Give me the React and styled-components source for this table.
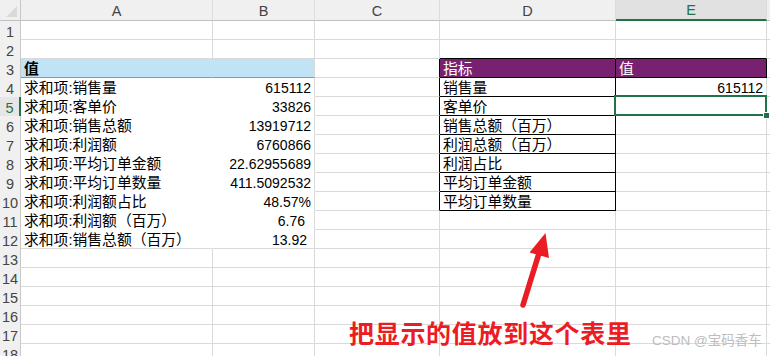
import React from "react";
import styled, { createGlobalStyle } from "styled-components";

const GRID = "#dadada";
const GREEN = "#217346";
const BLACK = "#000";
const PURPLE = "#782170";
const BLUE_FILL = "#c0e4f5";
const BLUE_LINE = "#5ba8d8";

const COLUMNS = ["A", "B", "C", "D", "E", ""];
const ROW_COUNT = 18;
const ACTIVE_ROW = 5;
const ACTIVE_COL = 4;

const pivot = [
  ["求和项:销售量", "615112"],
  ["求和项:客单价", "33826"],
  ["求和项:销售总额", "13919712"],
  ["求和项:利润额", "6760866"],
  ["求和项:平均订单金额", "22.62955689"],
  ["求和项:平均订单数量", "411.5092532"],
  ["求和项:利润额占比", "48.57%"],
  ["求和项:利润额（百万）", "6.76", 9],
  ["求和项:销售总额（百万）", "13.92", 7],
];

const indicators = [
  "销售量",
  "客单价",
  "销售总额（百万）",
  "利润总额（百万）",
  "利润占比",
  "平均订单金额",
  "平均订单数量",
];

// describes one cell of the sheet: row is 1-based, col 0..5 (A..F)
const cellFor = (row, col) => {
  const cell = {};
  const inPivot = row >= 4 && row <= 12;
  const inTable = row >= 3 && row <= 10;

  if (col === 0 || col === 1) {
    if (row === 3) {
      cell.fill = BLUE_FILL;
      cell.bottom = BLUE_LINE;
      if (col === 0) {
        cell.right = "transparent";
        cell.text = "值";
        cell.bold = true;
      }
    }
    if (inPivot) {
      const [label, value, pad] = pivot[row - 4];
      if (col === 0) {
        cell.text = label;
        cell.right = "transparent";
      } else {
        cell.text = value;
        cell.align = "right";
        cell.padRight = pad;
      }
      if (row !== 12) cell.bottom = "transparent";
    }
  }

  if (col === 2 && inTable) cell.right = BLACK;

  if ((col === 3 || col === 4) && row === 2) cell.bottom = BLACK;

  if (col === 3 && inTable) {
    cell.right = BLACK;
    cell.bottom = BLACK;
    if (row === 3) {
      cell.fill = PURPLE;
      cell.color = "#fff";
      cell.text = "指标";
    } else {
      cell.text = indicators[row - 4];
    }
  }

  if (col === 4) {
    if (row === 3) {
      cell.fill = PURPLE;
      cell.color = "#fff";
      cell.text = "值";
      cell.right = BLACK;
      cell.bottom = BLACK;
    }
    if (row === 4) {
      cell.text = "615112";
      cell.align = "right";
    }
    if (row === ACTIVE_ROW) cell.selected = true;
  }

  return cell;
};

const App = () => {
  const rows = Array.from({ length: ROW_COUNT }, (_, i) => i + 1);

  return (
    <>
      <GlobalStyle />
      <Page>
        <Sheet>
          <Corner />
          {COLUMNS.map((name, i) => (
            <ColHead key={`h${i}`} $active={i === ACTIVE_COL}>
              {name}
            </ColHead>
          ))}
          {rows.map(row => (
            <React.Fragment key={row}>
              <RowHead $active={row === ACTIVE_ROW}>{row}</RowHead>
              {COLUMNS.map((_, col) => {
                const c = cellFor(row, col);
                return (
                  <Cell
                    key={col}
                    $fill={c.fill}
                    $color={c.color}
                    $bold={c.bold}
                    $align={c.align}
                    $padRight={c.padRight}
                    $right={c.right}
                    $bottom={c.bottom}
                    $selected={c.selected}
                    $numeric={c.align === "right"}
                  >
                    {c.text}
                  </Cell>
                );
              })}
            </React.Fragment>
          ))}
        </Sheet>

        <Arrow viewBox="0 0 770 356" width="770" height="356">
          <line
            x1="523"
            y1="305"
            x2="540"
            y2="250"
            stroke="#ea1d25"
            strokeWidth="5.5"
            strokeLinecap="round"
          />
          <polygon points="545.5,233 549,258 529.5,252.5" fill="#ea1d25" />
        </Arrow>
        <Note>把显示的值放到这个表里</Note>
        <Watermark>CSDN @宝码香车</Watermark>
      </Page>
    </>
  );
};

const GlobalStyle = createGlobalStyle`
  html, body {
    margin: 0;
    padding: 0;
    background: #fff;
  }
  body {
    font-family: "Liberation Sans", "Noto Sans CJK SC", sans-serif;
  }
`;

const Page = styled.div`
  position: relative;
  width: 770px;
  height: 356px;
  overflow: hidden;
  background: #fff;
`;

const Sheet = styled.div`
  display: grid;
  grid-template-columns: 21px 192px 102px 125px 176px 151px 1fr;
  grid-template-rows: 21px;
  grid-auto-rows: 19px;
`;

const Corner = styled.div`
  box-sizing: border-box;
  position: relative;
  background: #f0f0f0;
  border-right: 1px solid #c8c8c8;
  border-bottom: 1px solid #c0c0c0;

  &::after {
    content: "";
    position: absolute;
    right: 3px;
    bottom: 3px;
    width: 0;
    height: 0;
    border-left: 11px solid transparent;
    border-bottom: 11px solid #dadada;
  }
`;

const ColHead = styled.div`
  box-sizing: border-box;
  display: flex;
  align-items: center;
  justify-content: center;
  background: ${p => (p.$active ? "#e1e1e1" : "#f0f0f0")};
  color: ${p => (p.$active ? GREEN : "#444")};
  border-right: 1px solid #dcdcdc;
  border-bottom: ${p => (p.$active ? `2px solid ${GREEN}` : "1px solid #c0c0c0")};
  font-size: 14.5px;
  padding-top: 1px;
`;

const RowHead = styled.div`
  box-sizing: border-box;
  display: flex;
  align-items: center;
  justify-content: center;
  background: ${p => (p.$active ? "#e6e6e6" : "#f0f0f0")};
  color: ${p => (p.$active ? GREEN : "#444")};
  border-right: ${p => (p.$active ? `2px solid ${GREEN}` : "1px solid #c8c8c8")};
  font-size: 14.5px;
  padding-top: 2px;
`;

const Cell = styled.div`
  box-sizing: border-box;
  position: ${p => (p.$selected ? "relative" : "static")};
  display: flex;
  align-items: center;
  justify-content: ${p => (p.$align === "right" ? "flex-end" : "flex-start")};
  padding: 2px ${p => p.$padRight ?? 3}px 0 3px;
  background: ${p => p.$fill || "#fff"};
  color: ${p => p.$color || "#000"};
  font-weight: ${p => (p.$bold ? 700 : 400)};
  font-size: ${p => (p.$numeric ? "14px" : "14.8px")};
  line-height: 17px;
  white-space: nowrap;
  border-right: 1px solid ${p => p.$right || GRID};
  border-bottom: 1px solid ${p => p.$bottom || GRID};

  ${p =>
    p.$selected &&
    `
    &::after {
      content: "";
      position: absolute;
      top: -2px;
      left: -2px;
      right: -1px;
      bottom: -1px;
      border: 2px solid ${GREEN};
    }
    &::before {
      content: "";
      position: absolute;
      right: -4px;
      bottom: -4px;
      width: 5px;
      height: 5px;
      background: ${GREEN};
      border: 1px solid #fff;
      z-index: 1;
    }
  `}
`;

const Arrow = styled.svg`
  position: absolute;
  left: 0;
  top: 0;
  pointer-events: none;
`;

const Note = styled.div`
  position: absolute;
  left: 349px;
  top: 318px;
  color: #ec1c24;
  font-family: "Noto Sans CJK SC", sans-serif;
  font-weight: 700;
  font-size: 25px;
  letter-spacing: 0.7px;
  line-height: 28px;
  white-space: nowrap;
`;

const Watermark = styled.div`
  position: absolute;
  left: 652px;
  top: 333px;
  color: #bdbdbd;
  font-family: "Liberation Sans", "Noto Sans CJK SC", sans-serif;
  font-size: 13.5px;
  line-height: 16px;
  white-space: nowrap;
`;

export default App;
